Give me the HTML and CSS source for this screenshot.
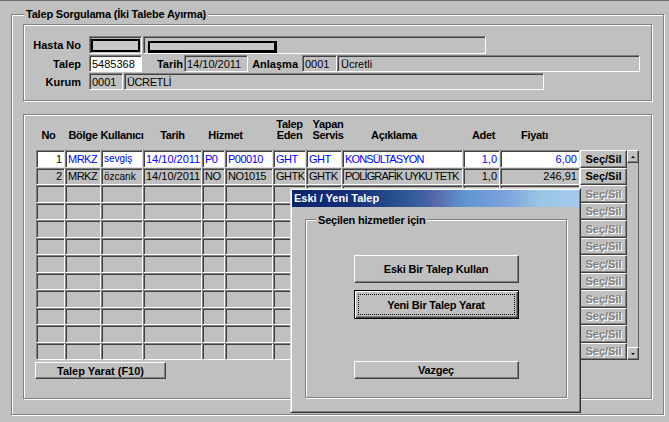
FILE: index.html
```html
<!DOCTYPE html>
<html lang="tr">
<head>
<meta charset="utf-8">
<title>Talep Sorgulama</title>
<link rel="stylesheet" href="styles.css">
</head>
<body>
<div class="window">
  <div class="group etched">
    <div class="group-title">Talep Sorgulama (İki Talebe Ayırma)</div>

    <div class="panel info etched">
      <div class="frow tall">
        <span class="lbl lbl-main">Hasta No</span>
        <span class="fld w-hno"><span class="redact r1"></span></span>
        <span class="fld w-hname"><span class="redact r2"></span></span>
      </div>
      <div class="frow">
        <span class="lbl lbl-main">Talep</span>
        <span class="fld white w-talep">5485368</span>
        <span class="lbl w-tarih-l">Tarih</span>
        <span class="fld w-tarih">14/10/2011</span>
        <span class="lbl w-anl-l">Anlaşma</span>
        <span class="fld w-anlno">0001</span>
        <span class="fld w-anlname">Ücretli</span>
      </div>
      <div class="frow">
        <span class="lbl lbl-main">Kurum</span>
        <span class="fld w-kno">0001</span>
        <span class="fld w-kname caps">ÜCRETLİ</span>
      </div>
    </div>

    <div class="panel tpanel etched">
      <div class="thead">
        <div class="th c-no th-no">No</div>
        <div class="th c-bolge">Bölge</div>
        <div class="th c-kul">Kullanıcı</div>
        <div class="th c-tarih">Tarih</div>
        <div class="th c-hizmet th-hizmet">Hizmet</div>
        <div class="th c-te">Talep<br>Eden</div>
        <div class="th c-ys th-ys">Yapan<br>Servis</div>
        <div class="th c-acik th-acik">Açıklama</div>
        <div class="th c-adet th-adet">Adet</div>
        <div class="th c-fiyat th-fiyat">Fiyatı</div>
      </div>

      <div class="tbody">
        <div class="rows">
          <div class="row active">
            <div class="cell c-no num black">1</div>
            <div class="cell c-bolge caps">MRKZ</div>
            <div class="cell c-kul small">sevgiş</div>
            <div class="cell c-tarih">14/10/2011</div>
            <div class="cell c-h1 caps">P0</div>
            <div class="cell c-h2 caps">P00010</div>
            <div class="cell c-te caps">GHT</div>
            <div class="cell c-ys caps">GHT</div>
            <div class="cell c-acik caps">KONSÜLTASYON</div>
            <div class="cell c-adet num">1,0</div>
            <div class="cell c-fiyat num">6,00</div>
            <button class="btn sec">Seç/Sil</button>
          </div>
          <div class="row">
            <div class="cell c-no num">2</div>
            <div class="cell c-bolge caps">MRKZ</div>
            <div class="cell c-kul small">özcank</div>
            <div class="cell c-tarih">14/10/2011</div>
            <div class="cell c-h1 caps">NO</div>
            <div class="cell c-h2 caps">NO1015</div>
            <div class="cell c-te caps">GHTK</div>
            <div class="cell c-ys caps">GHTK</div>
            <div class="cell c-acik caps">POLİGRAFİK UYKU TETK</div>
            <div class="cell c-adet num">1,0</div>
            <div class="cell c-fiyat num">246,91</div>
            <button class="btn sec">Seç/Sil</button>
          </div>
          <div class="row"><div class="cell c-no"></div><div class="cell c-bolge"></div><div class="cell c-kul"></div><div class="cell c-tarih"></div><div class="cell c-h1"></div><div class="cell c-h2"></div><div class="cell c-te"></div><div class="cell c-ys"></div><div class="cell c-acik"></div><div class="cell c-adet"></div><div class="cell c-fiyat"></div><button class="btn sec" disabled>Seç/Sil</button></div>
          <div class="row"><div class="cell c-no"></div><div class="cell c-bolge"></div><div class="cell c-kul"></div><div class="cell c-tarih"></div><div class="cell c-h1"></div><div class="cell c-h2"></div><div class="cell c-te"></div><div class="cell c-ys"></div><div class="cell c-acik"></div><div class="cell c-adet"></div><div class="cell c-fiyat"></div><button class="btn sec" disabled>Seç/Sil</button></div>
          <div class="row"><div class="cell c-no"></div><div class="cell c-bolge"></div><div class="cell c-kul"></div><div class="cell c-tarih"></div><div class="cell c-h1"></div><div class="cell c-h2"></div><div class="cell c-te"></div><div class="cell c-ys"></div><div class="cell c-acik"></div><div class="cell c-adet"></div><div class="cell c-fiyat"></div><button class="btn sec" disabled>Seç/Sil</button></div>
          <div class="row"><div class="cell c-no"></div><div class="cell c-bolge"></div><div class="cell c-kul"></div><div class="cell c-tarih"></div><div class="cell c-h1"></div><div class="cell c-h2"></div><div class="cell c-te"></div><div class="cell c-ys"></div><div class="cell c-acik"></div><div class="cell c-adet"></div><div class="cell c-fiyat"></div><button class="btn sec" disabled>Seç/Sil</button></div>
          <div class="row"><div class="cell c-no"></div><div class="cell c-bolge"></div><div class="cell c-kul"></div><div class="cell c-tarih"></div><div class="cell c-h1"></div><div class="cell c-h2"></div><div class="cell c-te"></div><div class="cell c-ys"></div><div class="cell c-acik"></div><div class="cell c-adet"></div><div class="cell c-fiyat"></div><button class="btn sec" disabled>Seç/Sil</button></div>
          <div class="row"><div class="cell c-no"></div><div class="cell c-bolge"></div><div class="cell c-kul"></div><div class="cell c-tarih"></div><div class="cell c-h1"></div><div class="cell c-h2"></div><div class="cell c-te"></div><div class="cell c-ys"></div><div class="cell c-acik"></div><div class="cell c-adet"></div><div class="cell c-fiyat"></div><button class="btn sec" disabled>Seç/Sil</button></div>
          <div class="row"><div class="cell c-no"></div><div class="cell c-bolge"></div><div class="cell c-kul"></div><div class="cell c-tarih"></div><div class="cell c-h1"></div><div class="cell c-h2"></div><div class="cell c-te"></div><div class="cell c-ys"></div><div class="cell c-acik"></div><div class="cell c-adet"></div><div class="cell c-fiyat"></div><button class="btn sec" disabled>Seç/Sil</button></div>
          <div class="row"><div class="cell c-no"></div><div class="cell c-bolge"></div><div class="cell c-kul"></div><div class="cell c-tarih"></div><div class="cell c-h1"></div><div class="cell c-h2"></div><div class="cell c-te"></div><div class="cell c-ys"></div><div class="cell c-acik"></div><div class="cell c-adet"></div><div class="cell c-fiyat"></div><button class="btn sec" disabled>Seç/Sil</button></div>
          <div class="row"><div class="cell c-no"></div><div class="cell c-bolge"></div><div class="cell c-kul"></div><div class="cell c-tarih"></div><div class="cell c-h1"></div><div class="cell c-h2"></div><div class="cell c-te"></div><div class="cell c-ys"></div><div class="cell c-acik"></div><div class="cell c-adet"></div><div class="cell c-fiyat"></div><button class="btn sec" disabled>Seç/Sil</button></div>
          <div class="row"><div class="cell c-no"></div><div class="cell c-bolge"></div><div class="cell c-kul"></div><div class="cell c-tarih"></div><div class="cell c-h1"></div><div class="cell c-h2"></div><div class="cell c-te"></div><div class="cell c-ys"></div><div class="cell c-acik"></div><div class="cell c-adet"></div><div class="cell c-fiyat"></div><button class="btn sec" disabled>Seç/Sil</button></div>
        </div>
        <div class="vscroll">
          <div class="sb-btn"><span class="arrow up"></span></div>
          <div class="sb-track"></div>
          <div class="sb-btn"><span class="arrow down"></span></div>
        </div>
      </div>

      <button class="btn talep-yarat">Talep Yarat (F10)</button>
    </div>
  </div>

  <div class="dialog">
    <div class="titlebar">Eski / Yeni Talep</div>
    <div class="dbody">
      <div class="dgroup etched">
        <div class="dgroup-title">Seçilen hizmetler için</div>
        <button class="btn dbtn eski">Eski Bir Talep Kullan</button>
        <button class="btn dbtn yeni default"><span class="focus">Yeni Bir Talep Yarat</span></button>
        <button class="btn dbtn vazgec">Vazgeç</button>
      </div>
    </div>
  </div>
</div>
</body>
</html>
```

FILE: styles.css
```css
* { box-sizing: border-box; }
html, body { margin: 0; padding: 0; }
body {
  background: #c0c0c0;
  font-family: "Liberation Sans", Arial, sans-serif;
  font-size: 11px;
  color: #000;
}
button {
  font: inherit;
  margin: 0;
  padding: 0;
  color: #000;
}

.window {
  position: relative;
  width: 669px;
  height: 422px;
  overflow: hidden;
  border-top: 1px solid #707070;
  padding: 13px 0 0 11px;
}

.etched {
  border: 1px solid #808080;
  box-shadow: inset 1px 1px 0 #fff, 1px 1px 0 #fff;
}

.group {
  position: relative;
  width: 653px;
  height: 401px;
  padding: 9px 0 0 11px;
}
.group-title {
  position: absolute;
  top: -7px;
  left: 12px;
  padding: 0 2px;
  background: #c0c0c0;
  font-weight: bold;
  line-height: 13px;
  letter-spacing: -0.2px;
  white-space: nowrap;
}

/* ---------- info panel ---------- */
.panel { width: 629px; }
.info {
  height: 77px;
  padding-top: 11px;
}
.frow {
  display: flex;
  align-items: stretch;
  height: 17px;
  margin-bottom: 1px;
}
.frow.tall { height: 18px; }
.lbl {
  font-weight: bold;
  text-align: right;
  white-space: nowrap;
  align-self: center;
}
.lbl-main { width: 57px; margin-right: 8px; }
.w-tarih-l { width: 41px; margin-right: 1px; }
.w-anl-l { width: 50px; margin-right: 4px; }

.fld {
  display: flex;
  align-items: center;
  border: 1px solid;
  border-color: #808080 #fff #fff #808080;
  box-shadow: inset 1px 1px 0 #404040;
  padding-left: 2px;
  white-space: nowrap;
  overflow: hidden;
  background: #c0c0c0;
}
.fld.white { background: #fff; }
.fld.caps { letter-spacing: -0.4px; }
.w-hno { width: 53px; }
.w-hname { width: 343px; margin-left: 1px; }
.w-talep { width: 53px; }
.w-tarih { width: 64px; }
.w-anlno { width: 35px; }
.w-anlname { width: 303px; padding-left: 3px; }
.w-kno { width: 34px; margin-right: 1px; }
.w-kname { width: 420px; }

.redact {
  display: block;
  border: 2px solid #000;
  background: #c8c8c8;
  align-self: flex-start;
}
.r1 { width: 49px; height: 13px; margin: 2px 0 0 -1px; }
.r2 { width: 129px; height: 12px; margin: 4px 0 0 2px; border-width: 2px 3px 3px 2px; }

/* ---------- table panel ---------- */
.tpanel {
  height: 285px;
  margin-top: 13px;
  padding-left: 12px;
}
.thead {
  display: flex;
  height: 35px;
}
.th {
  display: flex;
  flex-direction: column;
  justify-content: flex-end;
  align-items: center;
  text-align: center;
  padding-bottom: 9px;
  font-weight: bold;
  line-height: 11px;
  letter-spacing: -0.3px;
  white-space: nowrap;
}
.th-no { padding-right: 4px; }
.th-hizmet { padding-right: 24px; }
.th-ys { padding-left: 8px; }
.th-acik { padding-right: 17px; }
.th-adet { padding-left: 4px; }
.th-fiyat { padding-right: 11px; }

.c-no { width: 29px; }
.c-bolge { width: 36px; }
.c-kul { width: 42px; }
.c-tarih { width: 59px; }
.c-hizmet { width: 71px; }
.c-h1 { width: 23px; }
.c-h2 { width: 48px; }
.c-te { width: 33px; }
.c-ys { width: 36px; }
.c-acik { width: 121px; }
.c-adet { width: 37px; }
.c-fiyat { width: 80px; }

.tbody {
  display: flex;
}
.rows {
  width: 591px;
}
.row {
  display: flex;
  height: 17.5px;
}
.cell {
  display: flex;
  align-items: center;
  border: 1px solid;
  border-color: #808080 #fff #fff #808080;
  box-shadow: inset 1px 1px 0 #404040;
  padding: 0 1px 0 2px;
  white-space: nowrap;
  overflow: hidden;
  background: #c0c0c0;
}
.cell.num { justify-content: flex-end; padding-right: 2px; }
.cell.small { font-size: 10px; }
.cell.caps { letter-spacing: -0.5px; }
.cell.c-acik.caps { letter-spacing: -0.85px; }
.row.active .cell {
  background: #fff;
  color: #0000ff;
  border-color: #808080 #dfdfdf #dfdfdf #808080;
}
.row.active .cell.black { color: #000; }

.btn {
  display: flex;
  align-items: center;
  justify-content: center;
  background: #c0c0c0;
  border: 1px solid;
  border-color: #fff #404040 #404040 #fff;
  box-shadow: inset -1px -1px 0 #808080;
  font-weight: bold;
  white-space: nowrap;
}
.btn:disabled {
  color: #808080;
  text-shadow: 1px 1px 0 #fff;
}
.sec {
  width: 47px;
  height: 100%;
}

.vscroll {
  width: 12px;
  display: flex;
  flex-direction: column;
}
.sb-btn {
  height: 13px;
  display: flex;
  align-items: center;
  justify-content: center;
  border: 1px solid;
  border-color: #fff #404040 #404040 #fff;
  box-shadow: inset -1px -1px 0 #808080;
}
.sb-track {
  flex: 1;
  border-right: 1px solid #606060;
}
.arrow {
  width: 0;
  height: 0;
  border-left: 2px solid transparent;
  border-right: 2px solid transparent;
}
.arrow.up { border-bottom: 2px solid #000; }
.arrow.down { border-top: 2px solid #000; }

.talep-yarat {
  width: 131px;
  height: 17px;
  margin: 2px 0 0 -1px;
}

/* ---------- dialog ---------- */
.dialog {
  position: absolute;
  left: 290px;
  top: 187px;
  width: 291px;
  height: 225px;
  background: #c0c0c0;
  border: 1px solid;
  border-color: #dfdfdf #303030 #303030 #dfdfdf;
  box-shadow: inset 1px 1px 0 #fff, inset -1px -1px 0 #808080;
  padding: 1px;
  display: flex;
  flex-direction: column;
}
.titlebar {
  height: 17px;
  line-height: 17px;
  padding-left: 2px;
  color: #fff;
  font-weight: bold;
  white-space: nowrap;
  background: linear-gradient(90deg, #0a246a 0%, #16307a 22%, #2a5592 38%, #3f62a2 46%, #5a68a8 50%, #5f95d2 60%, #7fa2dc 75%, #98c6e2 86%, #a6caf0 100%);
}
.dbody {
  flex: 1;
  padding: 12px 11px 12px 13px;
}
.dgroup {
  position: relative;
  width: 262px;
  height: 179px;
  display: flex;
  flex-direction: column;
  align-items: center;
  padding-top: 35px;
}
.dgroup-title {
  position: absolute;
  top: -6px;
  left: 10px;
  padding: 0 2px;
  background: #c0c0c0;
  font-weight: bold;
  line-height: 13px;
  letter-spacing: -0.2px;
  white-space: nowrap;
}
.dbtn {
  width: 165px;
  letter-spacing: -0.2px;
}
.eski { height: 28px; }
.yeni {
  height: 29px;
  margin-top: 7px;
  border: 1px solid #000;
  box-shadow: inset 1px 1px 0 #fff, inset -1px -1px 0 #404040, inset -2px -2px 0 #808080;
  align-items: stretch;
  padding: 3px;
}
.focus {
  flex: 1;
  display: flex;
  align-items: center;
  justify-content: center;
  border: 1px dotted #000;
}
.vazgec {
  height: 18px;
  margin-top: 42px;
}
```
